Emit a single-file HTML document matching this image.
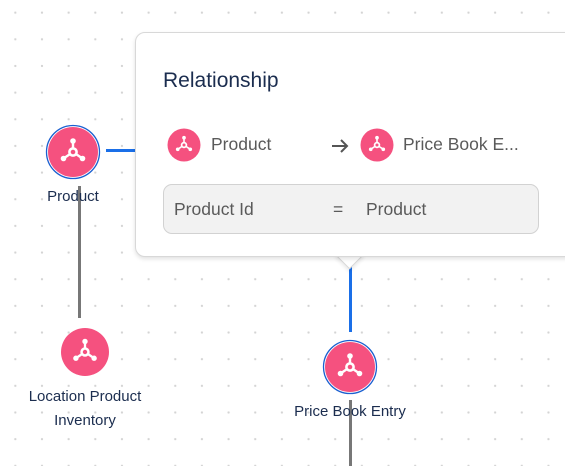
<!DOCTYPE html>
<html><head><style>
html,body{margin:0;padding:0;}
body{width:565px;height:466px;position:relative;overflow:hidden;background:#fff;font-family:"Liberation Sans",sans-serif;
background-image:radial-gradient(circle,#d4d4d4 1px,transparent 1.3px);background-size:26.67px 26.67px;background-position:2px -0.7px;}
.abs{position:absolute;}
.lbl{position:absolute;color:#1b2d4f;font-size:15px;text-align:center;line-height:24px;}
.pop{position:absolute;left:135px;top:32px;width:440px;height:223px;background:#fff;border:1px solid #d8d8d8;border-radius:10px;box-shadow:0 2px 4px rgba(0,0,0,.12);}
.notch{position:absolute;left:339px;top:244px;width:20px;height:20px;background:#fff;transform:rotate(45deg);border-right:1px solid #d8d8d8;border-bottom:1px solid #d8d8d8;box-shadow:2px 2px 3px rgba(0,0,0,.08);}
.t{position:absolute;color:#5a5a5a;font-size:17.5px;}
</style></head><body>
<svg width="0" height="0" style="position:absolute"><defs>
<g id="ic"><circle r="1" fill="#f5517f" transform="scale(25)"/>
<g stroke="#fff" stroke-width="2.4" fill="#fff"><line x1="0" y1="0" x2="0" y2="-11"/><line x1="0" y1="0" x2="-9.5" y2="6.5"/><line x1="0" y1="0" x2="9.5" y2="6.5"/>
<circle cx="0" cy="-11" r="2.8" stroke="none"/><circle cx="-9.5" cy="6.5" r="2.8" stroke="none"/><circle cx="9.5" cy="6.5" r="2.8" stroke="none"/>
<circle cx="0" cy="0" r="3.6" fill="#f5517f" stroke-width="2.6"/></g></g>
</defs></svg>
<div class="abs" style="left:106px;top:149px;width:30px;height:3px;background:#1a6fe8"></div>
<div class="abs" style="left:78px;top:186px;width:3px;height:132px;background:#777"></div>
<div class="abs" style="left:349px;top:266px;width:3px;height:66px;background:#1a6fe8"></div>
<div class="abs" style="left:349px;top:400px;width:3px;height:66px;background:#777"></div>
<svg class="abs" style="left:45px;top:124px" width="56" height="56"><circle cx="28" cy="28" r="26.5" fill="#fff" stroke="#1a5fd0" stroke-width="1.3"/><use href="#ic" transform="translate(28 28)"/></svg>
<svg class="abs" style="left:322px;top:339px" width="56" height="56"><circle cx="28" cy="28" r="26.5" fill="#fff" stroke="#1a5fd0" stroke-width="1.3"/><use href="#ic" transform="translate(28 28)"/></svg>
<svg class="abs" style="left:57px;top:324px" width="56" height="56"><use href="#ic" transform="translate(28 28) scale(0.96)"/></svg>
<div class="lbl" style="left:23px;top:185px;width:100px">Product</div>
<div class="lbl" style="left:5px;top:385px;width:160px">Location Product<br>Inventory</div>
<div class="lbl" style="left:270px;top:400px;width:160px">Price Book Entry</div>
<div class="notch"></div>
<div class="pop">
<div class="abs" style="left:27px;top:36px;font-size:21px;color:#1b2d4f">Relationship</div>
<svg class="abs" style="left:31px;top:95px" width="34" height="34"><use href="#ic" transform="translate(17 17) scale(0.66)"/></svg>
<div class="t" style="left:75px;top:101px">Product</div>
<svg class="abs" style="left:194px;top:104px" width="20" height="18"><path d="M2 9H17M11 3L17 9L11 15" stroke="#555" stroke-width="2" fill="none"/></svg>
<svg class="abs" style="left:224px;top:95px" width="34" height="34"><use href="#ic" transform="translate(17 17) scale(0.66)"/></svg>
<div class="t" style="left:267px;top:101px">Price Book E...</div>
<div class="abs" style="left:27px;top:151px;width:374px;height:48px;background:#f2f2f2;border:1px solid #d2d2d2;border-radius:9px"></div>
<div class="t" style="left:38px;top:166px">Product Id</div>
<div class="t" style="left:197px;top:166px">=</div>
<div class="t" style="left:230px;top:166px">Product</div>
</div>
</body></html>
